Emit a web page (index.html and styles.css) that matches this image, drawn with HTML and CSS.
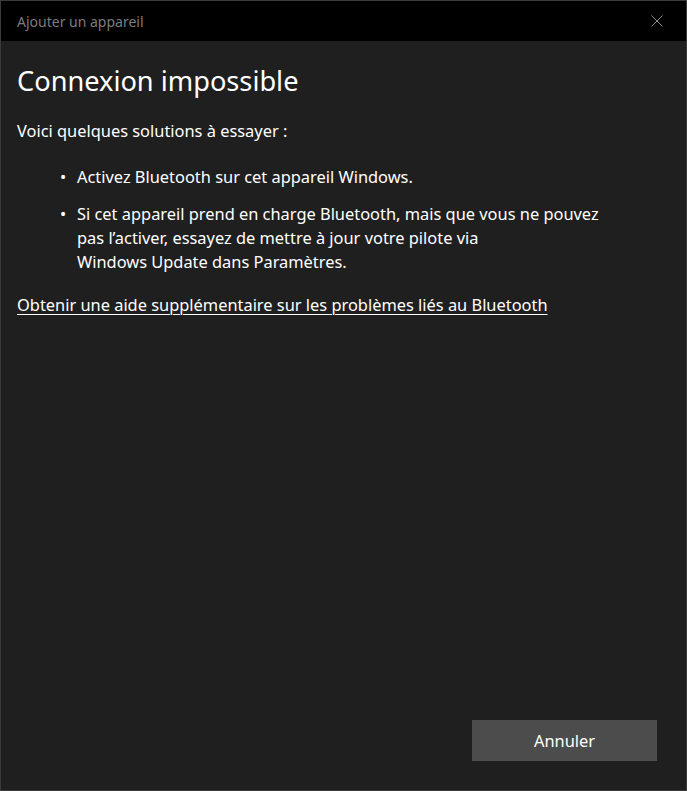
FILE: index.html
```html
<!DOCTYPE html>
<html lang="fr">
<head>
<meta charset="utf-8">
<title>Ajouter un appareil</title>
<link rel="stylesheet" href="styles.css">
</head>
<body>
<div class="window">
  <header class="titlebar">
    <span class="title">Ajouter un appareil</span>
    <button class="close" aria-label="Fermer">
      <svg width="12" height="12" viewBox="0 0 12 12"><path d="M0.5 0.5 L11.5 11.5 M11.5 0.5 L0.5 11.5" stroke="#8a8a8a" stroke-width="1" fill="none"/></svg>
    </button>
  </header>
  <main class="content">
    <h1 class="heading">Connexion impossible</h1>
    <p class="intro">Voici quelques solutions à essayer :</p>
    <ul class="tips">
      <li>Activez Bluetooth sur cet appareil Windows.</li>
      <li>Si cet appareil prend en charge Bluetooth, mais que vous ne pouvez<br>pas l’activer, essayez de mettre à jour votre pilote via<br>Windows Update dans Paramètres.</li>
    </ul>
    <a class="help" href="#">Obtenir une aide supplémentaire sur les problèmes liés au Bluetooth</a>
    <div class="spacer"></div>
    <div class="actions">
      <button class="btn">Annuler</button>
    </div>
  </main>
</div>
</body>
</html>
```
FILE: styles.css
```css
* { box-sizing: border-box; }
html, body { margin: 0; padding: 0; background: #1f1f1f; }
body { font-family: "Noto Sans", "Open Sans", sans-serif; color: #ffffff; }
.window {
  width: 687px;
  height: 791px;
  border: 1px solid #3a3a3a;
  display: flex;
  flex-direction: column;
  background: #1f1f1f;
}
.titlebar {
  height: 40px;
  background: #000000;
  display: flex;
  align-items: center;
  justify-content: space-between;
  padding-left: 16px;
  flex: none;
}
.title { font-size: 14px; color: #7c7c7c; }
.close {
  width: 58px; height: 40px;
  background: transparent; border: 0; padding: 0;
  display: flex; align-items: center; justify-content: center;
}
.content {
  flex: 1;
  display: flex;
  flex-direction: column;
  padding: 20px 29px 29px 16px;
}
.heading {
  margin: 0;
  font-size: 27.2px;
  font-weight: 400;
  line-height: 40px;
}
.intro { margin: 19px 0 0; font-size: 16.4px; line-height: 22px; }
.tips {
  list-style: none;
  margin: 23px 0 0;
  padding: 0 20px 0 43px;
  font-size: 16.4px;
  line-height: 24px;
}
.tips li { position: relative; padding-left: 17px; margin-bottom: 13px; }
.tips li::before {
  content: "•";
  position: absolute;
  left: 0;
  top: 0;
}
.help {
  align-self: flex-start;
  margin-top: 7px;
  font-size: 16.4px;
  line-height: 22px;
  color: #ffffff;
  text-decoration: underline;
  text-decoration-thickness: 1px;
  text-underline-offset: 3px;
}
.spacer { flex: 1; }
.actions { display: flex; justify-content: flex-end; }
.btn {
  width: 185px;
  height: 41px;
  background: #4c4c4c;
  border: 0;
  color: #ffffff;
  font-family: inherit;
  font-size: 16.4px;
}
```
